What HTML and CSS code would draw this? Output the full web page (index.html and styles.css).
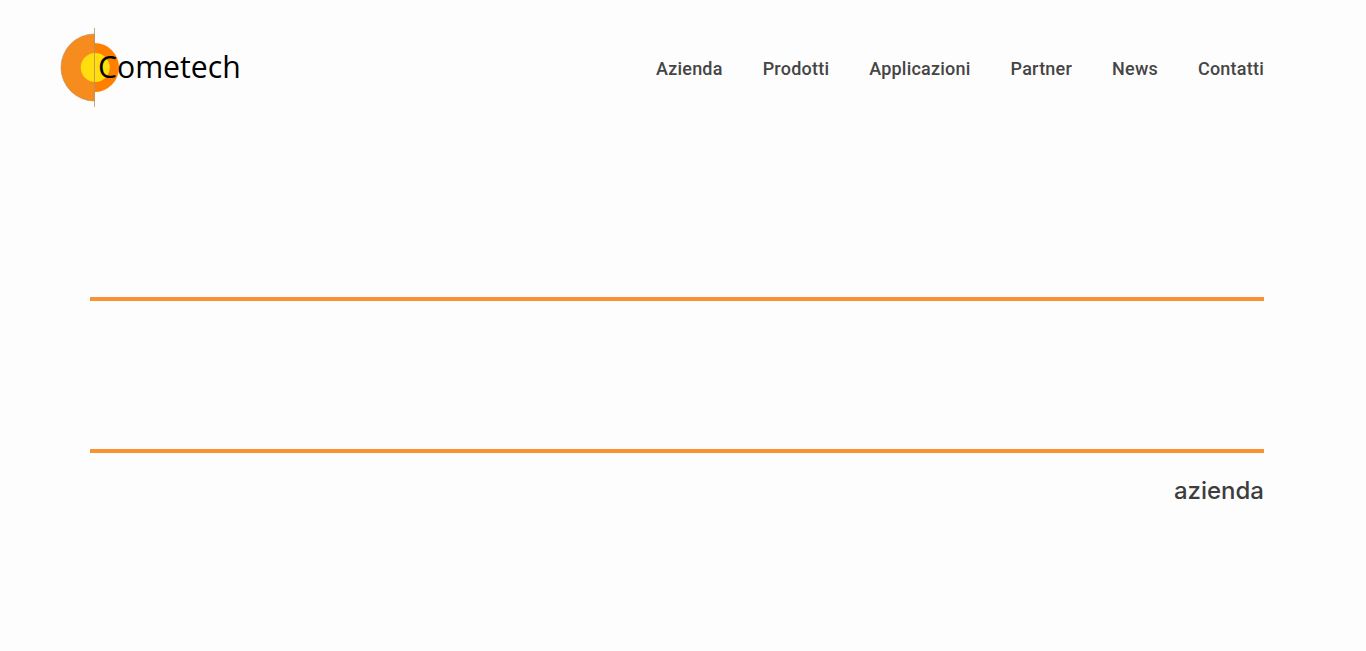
FILE: index.html
```html
<!DOCTYPE html>
<html lang="it">
<head>
  <meta charset="UTF-8">
  <meta name="viewport" content="width=device-width, initial-scale=1.0">
  <title>Cometech - Azienda</title>
  <link rel="stylesheet" href="styles.css">
</head>
<body>
  <header class="top">
    <a class="logo" href="#">
      <svg class="logo-img" width="190" height="90" viewBox="0 0 190 90">
        <path d="M34.5 17 A33.5 33.5 0 0 0 34.5 84 Z" fill="#f68b1e" stroke="#b98a55" stroke-width="0.6"/>
        <path d="M34.5 26 A24.5 24.5 0 0 1 34.5 75 Z" fill="#ff8000"/>
        <circle cx="35.2" cy="50.5" r="14.5" fill="#ffdd0e"/>
        <path d="M34.5 11 V91" stroke="#b8915f" stroke-width="0.8" fill="none"/>
        <text class="logo-text" x="38" y="61">Cometech</text>
      </svg>
    </a>
    <nav class="menu">
      <a href="#">Azienda</a>
      <a href="#">Prodotti</a>
      <a href="#">Applicazioni</a>
      <a href="#">Partner</a>
      <a href="#">News</a>
      <a href="#">Contatti</a>
    </nav>
  </header>

  <main class="content">
    <div class="band"></div>
    <h1 class="page-title">azienda</h1>
  </main>
</body>
</html>
```

FILE: styles.css
```css
html, body {
  margin: 0;
  padding: 0;
}
body {
  background-color: #fdfdfd;
  font-family: Roboto, "Liberation Sans", sans-serif;
  color: #3d3d3d;
  height: 651px;
  overflow: hidden;
}
a {
  color: inherit;
  text-decoration: none;
}
.top {
  display: flex;
  justify-content: space-between;
  align-items: center;
  height: 136px;
  padding: 0 102px 0 60px;
}
.logo {
  display: block;
  height: 90px;
  margin-bottom: 12px;
}
.logo-img {
  display: block;
}
.logo-text {
  font-family: "Open Sans", sans-serif;
  font-size: 30.2px;
  fill: #000;
}
.menu {
  display: flex;
  gap: 40px;
  font-size: 18px;
  font-weight: 500;
  letter-spacing: 0.22px;
  color: #454545;
}
.content {
  padding: 161px 102px 0 90px;
}
.band {
  height: 148px;
  border-top: 4px solid #fb9231;
  border-bottom: 4px solid #fb9231;
}
.page-title {
  margin: 20px 0 0;
  text-align: right;
  font-family: Inter, Roboto, sans-serif;
  font-size: 24px;
  line-height: 36px;
  font-weight: 550;
}
```
